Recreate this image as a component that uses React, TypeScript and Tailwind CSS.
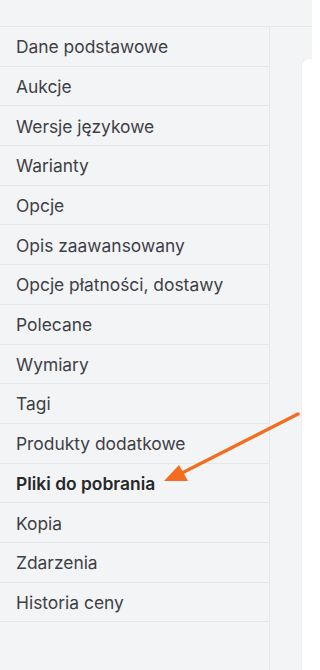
const items = [
  "Dane podstawowe",
  "Aukcje",
  "Wersje językowe",
  "Warianty",
  "Opcje",
  "Opis zaawansowany",
  "Opcje płatności, dostawy",
  "Polecane",
  "Wymiary",
  "Tagi",
  "Produkty dodatkowe",
  "Pliki do pobrania",
  "Kopia",
  "Zdarzenia",
  "Historia ceny",
];

const active = "Pliki do pobrania";

export default function App() {
  return (
    <div className="relative h-[670px] w-[312px] overflow-hidden bg-[#f3f4f6] font-['Inter',sans-serif]">
      {/* Top bar */}
      <div className="h-[27px] border-b border-[#e5e7eb]" />

      <div className="flex h-[643px]">
        {/* Sidebar */}
        <nav className="w-[270px] shrink-0 border-r border-[#e5e7eb]">
          {items.map((item) => (
            <div
              key={item}
              className={`flex h-[39.7px] items-center border-b border-[#e5e7eb] px-4 pt-[2px] text-[17.4px] ${
                item === active ? "font-semibold text-[#27272a]" : "text-[#3f3f46]"
              }`}
            >
              {item}
            </div>
          ))}
        </nav>

        {/* Content */}
        <div className="flex-1 pl-[31px] pt-[31px]">
          <div className="h-full rounded-tl-lg border-l border-t border-[#eceef1] bg-white" />
        </div>
      </div>

      {/* Annotation arrow */}
      <svg
        className="pointer-events-none absolute left-0 top-0"
        width="312"
        height="670"
        viewBox="0 0 312 670"
      >
        <line x1="298" y1="414" x2="180" y2="474" stroke="#f26d1f" strokeWidth="3.5" strokeLinecap="round" />
        <polygon points="164,481 179,465 188,481" fill="#f26d1f" />
      </svg>
    </div>
  );
}
